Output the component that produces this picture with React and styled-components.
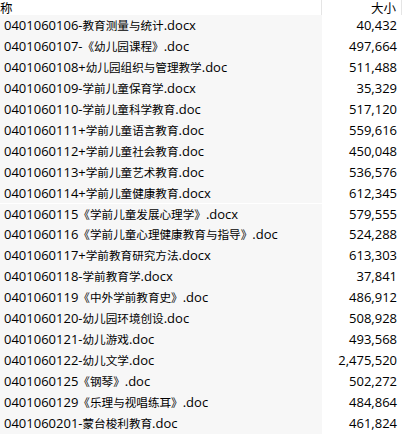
import React from "react";
import styled, { createGlobalStyle } from "styled-components";

const files = [
  ["0401060106-教育测量与统计.docx", "40,432"],
  ["0401060107-《幼儿园课程》.doc", "497,664"],
  ["0401060108+幼儿园组织与管理教学.doc", "511,488"],
  ["0401060109-学前儿童保育学.docx", "35,329"],
  ["0401060110-学前儿童科学教育.doc", "517,120"],
  ["0401060111+学前儿童语言教育.doc", "559,616"],
  ["0401060112+学前儿童社会教育.doc", "450,048"],
  ["0401060113+学前儿童艺术教育.doc", "536,576"],
  ["0401060114+学前儿童健康教育.docx", "612,345"],
  ["0401060115《学前儿童发展心理学》.docx", "579,555"],
  ["0401060116《学前儿童心理健康教育与指导》.doc", "524,288"],
  ["0401060117+学前教育研究方法.docx", "613,303"],
  ["0401060118-学前教育学.docx", "37,841"],
  ["0401060119《中外学前教育史》.doc", "486,912"],
  ["0401060120-幼儿园环境创设.doc", "508,928"],
  ["0401060121-幼儿游戏.doc", "493,568"],
  ["0401060122-幼儿文学.doc", "2,475,520"],
  ["0401060125《钢琴》.doc", "502,272"],
  ["0401060129《乐理与视唱练耳》.doc", "484,864"],
  ["0401060201-蒙台梭利教育.doc", "461,824"],
];

// split a file name into latin / chinese runs so each gets its own size
const CJK = /([\u3000-\u303f\u4e00-\u9fff\uff00-\uffef]+)/;

const GlobalStyle = createGlobalStyle`
  html, body {
    margin: 0;
    padding: 0;
    background: #fff;
    overflow: hidden;
  }
  body {
    font-family: "Open Sans", "Noto Sans CJK SC", sans-serif;
    font-size: 13px;
    color: #000;
  }
`;

const List = styled.div`
  display: grid;
  grid-template-columns: 322px 80px 1fr;
  width: 415px;
  height: 434px;
  overflow: hidden;
`;

const HeadCell = styled.div`
  height: 15px;
  line-height: 15px;
  overflow: hidden;
  font-family: "Noto Sans CJK SC", sans-serif;
  font-size: 12.5px;
  border-right: ${(p) => (p.last ? "none" : "1px solid #e5e5e5")};
  text-align: ${(p) => (p.right ? "right" : "left")};
  padding-right: ${(p) => (p.right ? "5px" : "0")};
  box-sizing: border-box;
`;

const NameCell = styled.div`
  height: 20.9px;
  line-height: 20.9px;
  background: #f7f7f7;
  padding-left: 4px;
  white-space: nowrap;
  overflow: hidden;
`;

const Han = styled.span`
  font-family: "Noto Sans CJK SC", sans-serif;
  font-size: 11.6px;
`;

const SizeCell = styled.div`
  height: 20.9px;
  line-height: 20.9px;
  text-align: right;
  padding-right: 5px;
  white-space: nowrap;
`;

const Blank = styled.div`
  height: 20.9px;
`;

const FileName = ({ text }) =>
  text.split(CJK).map((part, i) =>
    i % 2 ? <Han key={i}>{part}</Han> : <React.Fragment key={i}>{part}</React.Fragment>
  );

export default function App() {
  return (
    <>
      <GlobalStyle />
      <List>
        <HeadCell>称</HeadCell>
        <HeadCell right>大小</HeadCell>
        <HeadCell last />
        {files.map(([name, size]) => (
          <React.Fragment key={name}>
            <NameCell>
              <FileName text={name} />
            </NameCell>
            <SizeCell>{size}</SizeCell>
            <Blank />
          </React.Fragment>
        ))}
      </List>
    </>
  );
}
